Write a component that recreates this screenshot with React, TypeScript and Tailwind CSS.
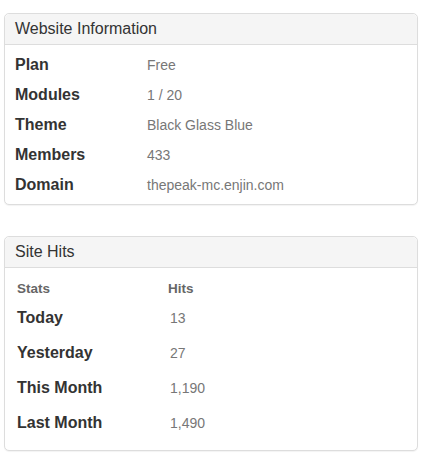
import React from "react";

const info: [string, string][] = [
  ["Plan", "Free"],
  ["Modules", "1 / 20"],
  ["Theme", "Black Glass Blue"],
  ["Members", "433"],
  ["Domain", "thepeak-mc.enjin.com"],
];

const hits: [string, string][] = [
  ["Today", "13"],
  ["Yesterday", "27"],
  ["This Month", "1,190"],
  ["Last Month", "1,490"],
];

function Panel({ title, children }: { title: string; children: React.ReactNode }) {
  return (
    <div className="ml-[4px] w-[414px] rounded-[5px] border border-[#dddddd] bg-white shadow-[0_1px_1px_rgba(0,0,0,0.05)]">
      <div className="flex h-[31px] items-center rounded-t-[5px] border-b border-[#dddddd] bg-[#f5f5f5] px-[10px] text-[16px] text-[#333333]">
        {title}
      </div>
      {children}
    </div>
  );
}

export default function App() {
  return (
    <div
      className="min-h-[472px] w-[439px] bg-white pt-[13px]"
      style={{ fontFamily: '"Liberation Sans", Arial, sans-serif' }}
    >
      <Panel title="Website Information">
        <div className="flex flex-col px-[10px] pt-[5px] pb-[4px]">
          {info.map(([k, v]) => (
            <div key={k} className="grid h-[30px] grid-cols-[132px_1fr] items-center">
              <span className="text-[16px] font-bold text-[#333333]">{k}</span>
              <span className="mt-[1px] text-[14px] text-[#777777]">{v}</span>
            </div>
          ))}
        </div>
      </Panel>

      <div className="h-[31px]" />

      <Panel title="Site Hits">
        <div className="flex flex-col px-[12px] pt-[11px] pb-[10px]">
          <div className="grid h-[21px] grid-cols-[151px_1fr] items-center text-[13.5px] font-bold text-[#666666]">
            <span>Stats</span>
            <span>Hits</span>
          </div>
          {hits.map(([k, v]) => (
            <div key={k} className="grid h-[35px] grid-cols-[153px_1fr] items-center">
              <span className="text-[16px] font-bold text-[#333333]">{k}</span>
              <span className="mt-[2px] text-[14px] text-[#777777]">{v}</span>
            </div>
          ))}
        </div>
      </Panel>
    </div>
  );
}
